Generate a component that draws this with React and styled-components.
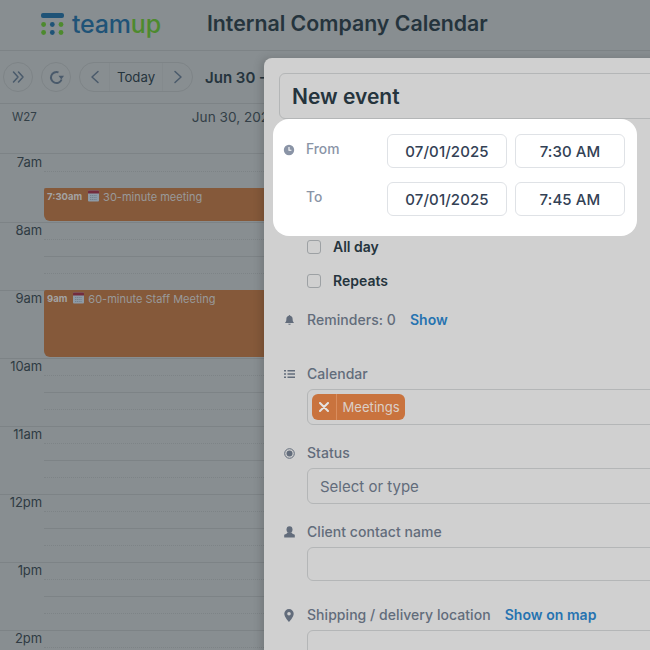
import React from "react";
import styled, { createGlobalStyle } from "styled-components";

const Global = createGlobalStyle`
  html, body { margin: 0; padding: 0; background: #888e91; }
  body { font-family: Inter, "Liberation Sans", sans-serif; }
  * { box-sizing: border-box; }
`;

const Page = styled.div`
  position: relative;
  width: 650px;
  height: 650px;
  overflow: hidden;
  background: #888e91;
`;

const Header = styled.header`
  height: 51px;
  display: flex;
  align-items: center;
  padding-left: 41px;
  border-bottom: 1px solid #7d8386;
`;

const LogoWord = styled.span`
  font-size: 25px;
  font-weight: 500;
  letter-spacing: -0.2px;
  margin-left: 7px;
  color: #1f5377;
  line-height: 1;
  position: relative;
  top: -1px;
  span { color: #4d8a2e; }
`;

const Title = styled.h1`
  margin: 0 0 0 46px;
  font-size: 21.3px;
  font-weight: 600;
  color: #25343d;
  position: relative;
  top: -2px;
  white-space: nowrap;
`;

const Toolbar = styled.div`
  height: 53px;
  display: flex;
  align-items: center;
  padding-left: 3px;
  gap: 8px;
  border-bottom: 1px solid #7d8386;
`;

const RoundButton = styled.div`
  width: 30px;
  height: 30px;
  border-radius: 50%;
  border: 1px solid #7e8487;
  display: flex;
  align-items: center;
  justify-content: center;
  color: #4a5a6b;
`;

const NavGroup = styled.div`
  width: 114px;
  height: 30px;
  border-radius: 15px;
  border: 1px solid #7e8487;
  display: grid;
  grid-template-columns: 29px 1fr 29px;
  color: #4a5a6b;
`;

const NavEnd = styled.span`
  display: flex;
  align-items: center;
  justify-content: center;
`;

const TodayLabel = styled.span`
  font-size: 13.2px;
  color: #25343d;
  display: flex;
  align-items: center;
  justify-content: center;
  border-left: 1px solid #848a8d;
  border-right: 1px solid #848a8d;
`;

const RangeLabel = styled.span`
  font-size: 15px;
  font-weight: 600;
  color: #25343d;
  margin-left: 4px;
  white-space: nowrap;
`;

const DayHead = styled.div`
  height: 50px;
  display: flex;
  padding: 6px 0 0 12px;
  border-bottom: 1px solid #7d8386;
  font-size: 11.5px;
  line-height: 14px;
  color: #333f47;
`;

const DayDate = styled.span`
  margin-left: 155px;
  font-size: 13.6px;
  white-space: nowrap;
`;

const Grid = styled.div`
  position: relative;
  padding-top: 1px;
`;

const HourRow = styled.div`
  height: 68px;
  display: grid;
  grid-template-columns: 44px 1fr;
  border-bottom: 1px solid #7d8386;
`;

const HourLabel = styled.div`
  font-size: 13px;
  letter-spacing: -0.1px;
  color: #2f3b43;
  text-align: right;
  padding: 0 2px 0 0;
  line-height: 15px;
`;

const HourSlots = styled.div`
  display: flex;
  flex-direction: column;
`;

const Slot = styled.div`
  height: 17px;
  border-bottom: 1px ${(p) => (p.$kind === "dot" ? "dotted" : "solid")} #7d8386;
  &:last-child { border-bottom: none; height: 16px; }
`;

const Event = styled.div`
  position: absolute;
  left: 44px;
  width: 224px;
  top: ${(p) => p.$top}px;
  height: ${(p) => p.$height}px;
  background: #85593a;
  border-radius: 2px 0 0 6px;
  padding: 2px 0 0 3px;
  display: flex;
  align-items: flex-start;
  gap: 4px;
  color: #999a9a;
  font-size: 11px;
  line-height: 14px;
  white-space: nowrap;
`;

const EventTime = styled.span`
  font-size: 9.5px;
  font-weight: 700;
  margin-right: 2px;
  color: #a3a3a3;
`;

const Modal = styled.section`
  position: absolute;
  left: 264px;
  top: 58px;
  width: 440px;
  height: 600px;
  background: #d0d0d0;
  border-radius: 8px 0 0 0;
  padding: 15px 0 0 15px;
  box-shadow: -3px 0 8px rgba(0, 0, 0, 0.15);
`;

const TitleInput = styled.div`
  height: 46px;
  border: 1px solid #b4b6b7;
  border-radius: 6px;
  display: flex;
  align-items: center;
  padding-left: 12px;
  font-size: 21px;
  font-weight: 600;
  color: #25343d;
`;

const Highlight = styled.div`
  width: 364px;
  height: 117px;
  margin-left: -6px;
  background: #fff;
  border-radius: 16px;
  padding: 15px 12px 0 10px;
  display: grid;
  grid-template-rows: 34px 34px;
  row-gap: 14px;
`;

const TimeRow = styled.div`
  display: grid;
  grid-template-columns: 23px 81px 120px 118px;
  align-items: center;
  & > :nth-child(4) { margin-left: 8px; }
`;

const TimeLabel = styled.span`
  font-size: 13.8px;
  font-weight: 500;
  color: #8a94a6;
  position: relative;
  top: -2px;
`;

const TimeField = styled.div`
  height: 34px;
  border: 1px solid #dfe2e6;
  border-radius: 6px;
  display: flex;
  align-items: center;
  justify-content: center;
  font-size: 15px;
  letter-spacing: 0.1px;
  font-weight: 500;
  color: #334155;
  width: ${(p) => p.$w}px;
`;

const Checks = styled.div`
  margin-left: 28px;
  display: flex;
  flex-direction: column;
  gap: 12px;
`;

const CheckRow = styled.div`
  height: 22px;
  display: flex;
  align-items: center;
  gap: 12px;
  font-size: 14px;
  font-weight: 600;
  color: #25343d;
`;

const CheckText = styled.span`
  margin-top: -2px;
`;

const Box = styled.span`
  width: 14px;
  height: 14px;
  border: 1px solid #9da1a4;
  border-radius: 3px;
`;

const Field = styled.div`
  display: grid;
  grid-template-columns: 28px 1fr;
  align-items: center;
  margin-top: ${(p) => p.$mt}px;
`;

const IconCell = styled.span`
  display: flex;
  padding-left: 5px;
  color: #626c7b;
`;

const LabelLine = styled.div`
  font-size: 14px;
  font-weight: 500;
  letter-spacing: 0.05px;
  color: #626c7b;
  line-height: 18px;
  white-space: nowrap;
`;

const LinkText = styled.span`
  color: #2673b0;
  font-weight: 600;
  margin-left: ${(p) => p.$ml}px;
`;

const InputBox = styled.div`
  grid-column: 2;
  height: ${(p) => p.$h}px;
  margin-top: 6px;
  border: 1px solid #b4b6b7;
  border-radius: 6px;
  display: flex;
  align-items: center;
  padding-left: ${(p) => p.$pl || 12}px;
  color: #626c7b;
  font-size: 15px;
`;

const Tag = styled.div`
  height: 26px;
  display: flex;
  align-items: center;
  background: #c9733e;
  border-radius: 6px;
  color: #dbcfc7;
  font-size: 13.1px;
`;

const TagClose = styled.span`
  width: 25px;
  height: 100%;
  display: flex;
  align-items: center;
  justify-content: center;
  border-right: 1px solid #d98d5e;
`;

const TagText = styled.span`
  padding: 0 5px 0 5.5px;
`;

const Logo = () => (
  <svg width="24" height="25" viewBox="0 0 24 25">
    <rect x="0" y="0" width="23" height="5" rx="2" fill="#1f5377" />
    <circle cx="2.6" cy="11.5" r="2.4" fill="#4d8a2e" />
    <circle cx="11.3" cy="11.5" r="2.4" fill="#1f5377" />
    <circle cx="20" cy="11.5" r="2.4" fill="#4d8a2e" />
    <circle cx="2.6" cy="19.5" r="2.4" fill="#4d8a2e" />
    <circle cx="11.3" cy="19.5" r="2.4" fill="#1f5377" />
    <circle cx="20" cy="19.5" r="2.4" fill="#4d8a2e" />
  </svg>
);

const Chev = ({ d }) => (
  <svg width="14" height="14" viewBox="0 0 14 14" fill="none" stroke="currentColor" strokeWidth="1.5" strokeLinecap="round" strokeLinejoin="round">
    <path d={d} />
  </svg>
);

const Refresh = () => (
  <svg width="15" height="15" viewBox="0 0 15 15" fill="none" stroke="currentColor" strokeWidth="2">
    <path d="M12.6 9.500A5.500 5.500 0 1 1 9.500 2.400" />
    <path d="M9.500 5.800h5.500L12.300 9.400z" fill="currentColor" stroke="none" />
  </svg>
);

const CalIcon = () => (
  <svg width="11" height="12" viewBox="0 0 11 12">
    <rect x="0" y="0.5" width="11" height="11" rx="1" fill="#8d9aa6" />
    <path d="M0 1.500a1 1 0 0 1 1-1h9a1 1 0 0 1 1 1V3.500H0z" fill="#732c3d" />
    <path d="M2 5.500h7M2 7.500h7M2 9.500h7" stroke="#75818c" strokeWidth="1" strokeDasharray="1.2 .6" />
  </svg>
);

const Clock = () => (
  <svg width="12" height="12" viewBox="0 0 12 12" style={{ marginTop: -3 }}>
    <circle cx="6" cy="6" r="5.200" fill="#8a94a6" />
    <path d="M6 3v3.200h2.400" stroke="#fff" strokeWidth="1.100" fill="none" />
  </svg>
);

const Bell = () => (
  <svg width="11" height="12" viewBox="0 0 12 12" fill="currentColor">
    <path d="M6 .5c.5 0 .8.3.8.8 1.800.4 2.600 1.800 2.600 3.500 0 2 .5 3 1.300 3.900v.6H1.300v-.6C2.100 7.800 2.600 6.800 2.600 4.800c0-1.700.8-3.100 2.600-3.500 0-.5.3-.8.8-.8z" />
    <path d="M4.700 10h2.600a1.300 1.300 0 0 1-2.600 0z" />
  </svg>
);

const ListIcon = () => (
  <svg width="11" height="10" viewBox="0 0 11 10" fill="currentColor">
    <rect x="0" y="1" width="2" height="1.500" />
    <rect x="3.500" y="1" width="7.500" height="1.500" />
    <rect x="0" y="4.250" width="2" height="1.500" />
    <rect x="3.500" y="4.250" width="7.500" height="1.500" />
    <rect x="0" y="7.500" width="2" height="1.500" />
    <rect x="3.500" y="7.500" width="7.500" height="1.500" />
  </svg>
);

const Radio = () => (
  <svg width="11" height="11" viewBox="0 0 11 11">
    <circle cx="5.500" cy="5.500" r="4.800" fill="none" stroke="currentColor" strokeWidth="1" />
    <circle cx="5.500" cy="5.500" r="3" fill="currentColor" />
  </svg>
);

const Person = () => (
  <svg width="11" height="12" viewBox="0 0 11 12" fill="currentColor">
    <ellipse cx="5.500" cy="3.600" rx="3" ry="3.400" />
    <path d="M3.500 6.500h4l1 1.300 2.300 1v2.700H.2V8.800l2.300-1z" />
  </svg>
);

const Pin = () => (
  <svg width="10" height="13" viewBox="0 0 10 13" fill="currentColor">
    <path fillRule="evenodd" d="M5 0a4.700 4.700 0 0 1 4.700 4.700C9.700 8 5 13 5 13S.3 8 .3 4.700A4.700 4.700 0 0 1 5 0zm0 3a1.800 1.800 0 1 0 0 3.600A1.800 1.800 0 0 0 5 3z" />
  </svg>
);

const X = () => (
  <svg width="10" height="10" viewBox="0 0 10 10" stroke="#e4e4e4" strokeWidth="2" strokeLinecap="round">
    <path d="M1 1l8 8M9 1l-8 8" />
  </svg>
);

const hours = ["7am", "8am", "9am", "10am", "11am", "12pm", "1pm", "2pm"];

const slots = ["dot", "solid", "dot", "solid"];

export default function App() {
  return (
    <Page>
      <Global />
      <Header>
        <Logo />
        <LogoWord>team<span>up</span></LogoWord>
        <Title>Internal Company Calendar</Title>
      </Header>
      <Toolbar>
        <RoundButton>
          <Chev d="M2.500 2 7 7l-4.500 5M7.500 2 12 7l-4.500 5" />
        </RoundButton>
        <RoundButton>
          <Refresh />
        </RoundButton>
        <NavGroup>
          <NavEnd><Chev d="M10 1.500 4 7l6 5.500" /></NavEnd>
          <TodayLabel>Today</TodayLabel>
          <NavEnd><Chev d="M4 1.500 10 7l-6 5.500" /></NavEnd>
        </NavGroup>
        <RangeLabel>Jun 30 - Jul 6, 2025</RangeLabel>
      </Toolbar>
      <DayHead>
        <span>W27</span>
        <DayDate>Jun 30, 2025</DayDate>
      </DayHead>
      <Grid>
        {hours.map((h) => (
          <HourRow key={h}>
            <HourLabel>{h}</HourLabel>
            <HourSlots>
              {slots.map((s, i) => (
                <Slot key={i} $kind={s} />
              ))}
            </HourSlots>
          </HourRow>
        ))}
        <Event $top={34} $height={33}>
          <EventTime>7:30am</EventTime>
          <CalIcon />
          <span>30-minute meeting</span>
        </Event>
        <Event $top={136} $height={67}>
          <EventTime>9am</EventTime>
          <CalIcon />
          <span>60-minute Staff Meeting</span>
        </Event>
      </Grid>
      <Modal>
        <TitleInput>New event</TitleInput>
        <Highlight>
          <TimeRow>
            <Clock />
            <TimeLabel>From</TimeLabel>
            <TimeField $w={120}>07/01/2025</TimeField>
            <TimeField $w={110}>7:30 AM</TimeField>
          </TimeRow>
          <TimeRow>
            <span />
            <TimeLabel>To</TimeLabel>
            <TimeField $w={120}>07/01/2025</TimeField>
            <TimeField $w={110}>7:45 AM</TimeField>
          </TimeRow>
        </Highlight>
        <Checks>
          <CheckRow><Box /><CheckText>All day</CheckText></CheckRow>
          <CheckRow><Box /><CheckText>Repeats</CheckText></CheckRow>
        </Checks>
        <Field $mt={19}>
          <IconCell><Bell /></IconCell>
          <LabelLine>Reminders: 0<LinkText $ml={14}>Show</LinkText></LabelLine>
        </Field>
        <Field $mt={36}>
          <IconCell><ListIcon /></IconCell>
          <LabelLine>Calendar</LabelLine>
          <InputBox $h={36} $pl={4}>
            <Tag>
              <TagClose><X /></TagClose>
              <TagText>Meetings</TagText>
            </Tag>
          </InputBox>
        </Field>
        <Field $mt={19}>
          <IconCell><Radio /></IconCell>
          <LabelLine>Status</LabelLine>
          <InputBox $h={36}>Select or type</InputBox>
        </Field>
        <Field $mt={19}>
          <IconCell><Person /></IconCell>
          <LabelLine>Client contact name</LabelLine>
          <InputBox $h={34} />
        </Field>
        <Field $mt={25}>
          <IconCell><Pin /></IconCell>
          <LabelLine>Shipping / delivery location<LinkText $ml={14}>Show on map</LinkText></LabelLine>
          <InputBox $h={36} />
        </Field>
      </Modal>
    </Page>
  );
}
